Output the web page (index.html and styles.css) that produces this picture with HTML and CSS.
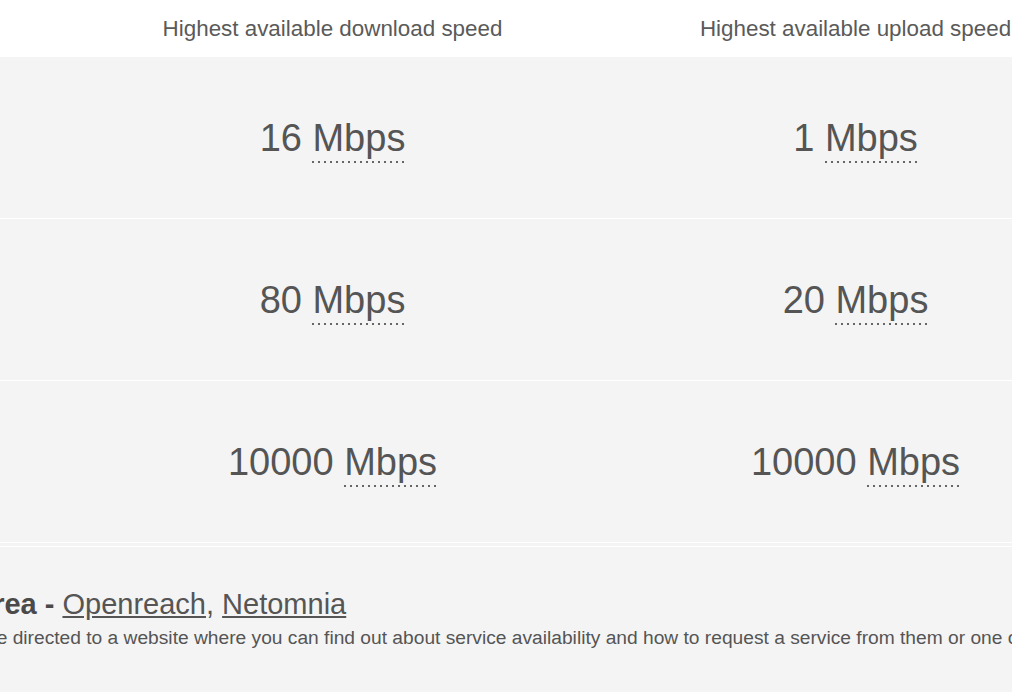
FILE: index.html
```html
<!DOCTYPE html>
<html lang="en">
<head>
<meta charset="utf-8">
<title>Broadband speeds</title>
<link rel="stylesheet" href="styles.css">
</head>
<body>
<div class="page">
  <div class="speeds">
    <div class="row head">
      <div class="cell label"></div>
      <div class="cell">Highest available download speed</div>
      <div class="cell">Highest available upload speed</div>
    </div>
    <div class="row">
      <div class="cell label">Standard broadband</div>
      <div class="cell value">16 <abbr class="unit" title="Megabits per second">Mbps</abbr></div>
      <div class="cell value">1 <abbr class="unit" title="Megabits per second">Mbps</abbr></div>
    </div>
    <div class="row">
      <div class="cell label">Superfast broadband</div>
      <div class="cell value">80 <abbr class="unit" title="Megabits per second">Mbps</abbr></div>
      <div class="cell value">20 <abbr class="unit" title="Megabits per second">Mbps</abbr></div>
    </div>
    <div class="row">
      <div class="cell label">Ultrafast broadband</div>
      <div class="cell value">10000 <abbr class="unit" title="Megabits per second">Mbps</abbr></div>
      <div class="cell value">10000 <abbr class="unit" title="Megabits per second">Mbps</abbr></div>
    </div>
  </div>
  <div class="info">
    <p class="info-title"><strong>Network operators in your area - </strong><a href="#">Openreach</a>, <a href="#">Netomnia</a></p>
    <p class="info-text">If you click on the providers' names, you will be directed to a website where you can find out about service availability and how to request a service from them or one of their providers.</p>
  </div>
</div>
</body>
</html>
```
FILE: styles.css
```css
html, body {
  margin: 0;
  padding: 0;
  background: #fff;
  overflow: hidden;
}
body {
  font-family: "Liberation Sans", Arial, sans-serif;
  color: #555;
}
.page {
  margin-left: -452px;
  width: 2400px;
}
.speeds {
  background: #f4f4f4;
  padding-bottom: 3px;
  border-bottom: 1px solid #fff;
}
.row {
  display: grid;
  grid-template-columns: 523px 523px 523px;
  align-items: center;
  height: 161px;
  background: #f4f4f4;
  border-bottom: 1px solid #fff;
}
.row.head {
  height: 57px;
  background: #fff;
  border-bottom: 0;
}
.cell {
  text-align: center;
}
.head .cell {
  font-size: 22.4px;
  color: #5a5a5a;
}
.label {
  font-size: 22px;
  text-align: left;
  padding-left: 20px;
}
.value {
  font-size: 38px;
  line-height: 44px;
  color: #555;
}
.unit {
  text-decoration: none;
  padding-bottom: 4px;
  background: linear-gradient(to right, #666 0 2px, transparent 2px) repeat-x left bottom / 6px 2px;
}
.info {
  background: #f4f4f4;
  padding: 40px 0 43px 60px;
  white-space: nowrap;
}
.info p {
  margin: 0;
}
.info-title {
  font-size: 29px;
  line-height: 34px;
  color: #555;
}
.info-title strong {
  color: #4a4a4a;
}
.info-title a {
  color: #555;
  text-decoration: underline;
}
.info-text {
  margin-top: 6px !important;
  font-size: 19.2px;
  line-height: 22px;
  color: #555;
}
```
